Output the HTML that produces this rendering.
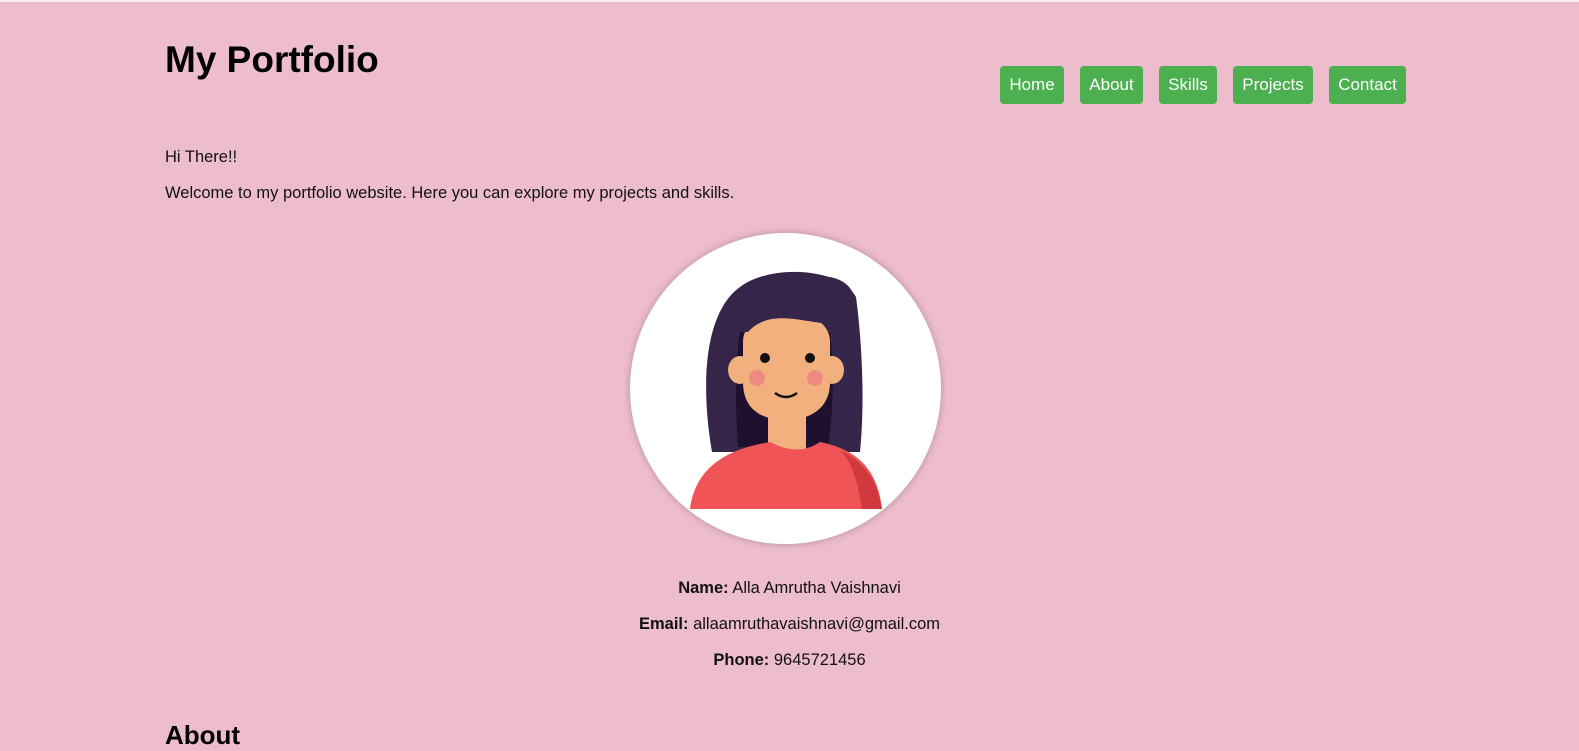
<!DOCTYPE html>
<html><head><style>
*{margin:0;padding:0;box-sizing:border-box}
body{width:1579px;height:731px;overflow:hidden;background:#eebdcd;font-family:"Liberation Sans",sans-serif;color:#111;position:relative;border-top:2px solid #f6f0f2}
h1{position:absolute;left:165px;top:37px;font-size:37px;font-weight:bold;color:#000}
.nav a{position:absolute;top:64px;height:38px;line-height:38px;background:#4caf50;color:#fff;font-size:17px;text-align:center;border-radius:4px;text-decoration:none}
p.t{position:absolute;left:165px;font-size:16.5px}
.info{position:absolute;left:0;width:1579px;text-align:center;font-size:16.5px}
h2{position:absolute;left:165px;top:718px;font-size:26px;color:#000}
.av{position:absolute;left:630px;top:231px;width:311px;height:311px;border-radius:50%;background:#fff;overflow:hidden;box-shadow:0 0 8px rgba(0,0,0,.25)}
</style></head><body>
<h1>My Portfolio</h1>
<div class="nav">
<a style="left:1000px;width:64px">Home</a>
<a style="left:1080px;width:63px">About</a>
<a style="left:1159px;width:58px">Skills</a>
<a style="left:1233px;width:80px">Projects</a>
<a style="left:1329px;width:77px">Contact</a>
</div>
<p class="t" style="top:146px">Hi There!!</p>
<p class="t" style="top:182px">Welcome to my portfolio website. Here you can explore my projects and skills.</p>
<div class="av"><svg width="311" height="311" viewBox="630 231 311 311">
<path d="M712 450 C700 380 705 310 740 285 C770 262 840 265 856 295 C862 340 865 400 860 450 Z" fill="#352549"/>
<path d="M738 445 C735 400 735 360 740 330 L830 330 C835 380 832 420 828 445 Z" fill="#1f1030"/>
<ellipse cx="740" cy="368" rx="12" ry="14" fill="#f3b07f"/>
<ellipse cx="832" cy="368" rx="12" ry="14" fill="#f3b07f"/>
<rect x="768" y="395" width="38" height="55" fill="#f3b07f"/>
<path d="M743 340 C743 300 830 300 830 340 L830 380 C830 410 805 418 786 418 C765 418 743 410 743 380 Z" fill="#f3b07f"/>
<path d="M740 330 C745 285 790 270 830 275 C855 280 860 300 852 320 C820 330 775 300 748 330 Z" fill="#352549"/>
<circle cx="757" cy="376" r="8" fill="#ee8a82"/><circle cx="815" cy="376" r="8" fill="#ee8a82"/>
<circle cx="765" cy="356" r="5" fill="#111"/><circle cx="810" cy="356" r="5" fill="#111"/>
<path d="M775 391 Q786 399 797 391" stroke="#111" stroke-width="2.5" fill="none"/>
<path d="M690 507 C695 470 720 448 770 440 C790 450 805 450 820 440 C860 448 878 470 882 507 Z" fill="#f05456"/>
<path d="M840 448 C865 460 878 480 882 507 L862 507 C858 480 852 460 840 448 Z" fill="#d03a3e"/>
</svg></div>
<div class="info" style="top:577px"><b>Name:</b> Alla Amrutha Vaishnavi</div>
<div class="info" style="top:613px"><b>Email:</b> allaamruthavaishnavi@gmail.com</div>
<div class="info" style="top:649px"><b>Phone:</b> 9645721456</div>
<h2>About</h2>
</body></html>
